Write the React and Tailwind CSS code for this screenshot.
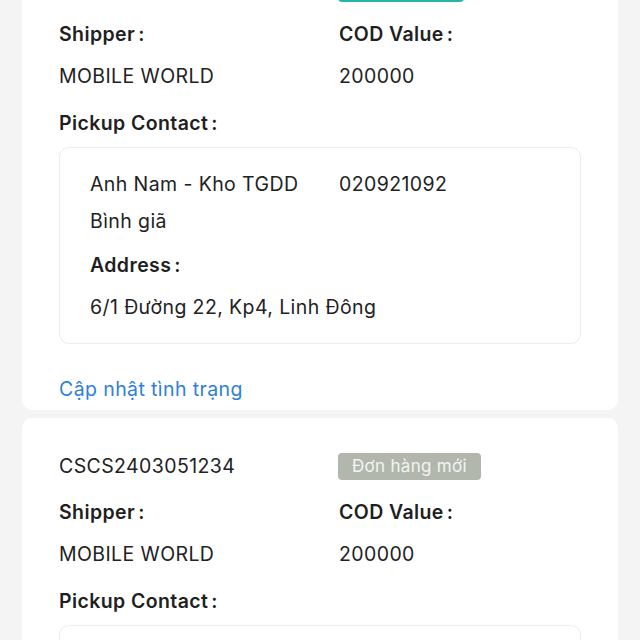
import React from 'react';

const orders = [
  {
    code: 'CSCS2403051233',
    status: 'Đã lấy hàng',
    badge: 'bg-[#25b5ad] text-white',
    shipper: 'MOBILE WORLD',
    cod: '200000',
    contact: 'Anh Nam - Kho TGDD',
    phone: '020921092',
    area: 'Bình giã',
    address: '6/1 Đường 22, Kp4, Linh Đông',
  },
  {
    code: 'CSCS2403051234',
    status: 'Đơn hàng mới',
    badge: 'bg-[#b2b7ad] text-[#f3f4f1]',
    shipper: 'MOBILE WORLD',
    cod: '200000',
    contact: 'Anh Nam - Kho TGDD',
    phone: '020921092',
    area: 'Bình giã',
    address: '6/1 Đường 22, Kp4, Linh Đông',
  },
];

const Label = ({ children }) => (
  <span className="font-semibold text-[#1f1f1f]">
    {children}
    <span className="ml-[3px]">:</span>
  </span>
);

const OrderCard = ({ order }) => (
  <div className="bg-white rounded-[10px] px-[37px] pt-[35px] pb-[9px]">
    {/* code + status */}
    <div className="flex items-center h-[27px]">
      <div className="w-[279px]">{order.code}</div>
      <span className={`h-[27px] px-[14px] rounded-[4px] text-[17px] tracking-[0.3px] leading-[27px] ${order.badge}`}>
        {order.status}
      </span>
    </div>

    {/* shipper / cod */}
    <div className="flex mt-[20px] h-[24px] leading-[24px]">
      <div className="w-[280px]"><Label>Shipper</Label></div>
      <div><Label>COD Value</Label></div>
    </div>
    <div className="flex mt-[18px] h-[24px] leading-[24px]">
      <div className="w-[280px]">{order.shipper}</div>
      <div>{order.cod}</div>
    </div>

    <div className="mt-[23px] h-[24px] leading-[24px]">
      <Label>Pickup Contact</Label>
    </div>

    {/* pickup box */}
    <div className="mt-[12px] border border-[#ececec] rounded-[10px] pl-[30px] pt-[24px] pb-[24px]">
      <div className="flex h-[24px] leading-[24px]">
        <div className="w-[249px]">{order.contact}</div>
        <div>{order.phone}</div>
      </div>
      <div className="mt-[13px] h-[24px] leading-[24px]">{order.area}</div>
      <div className="mt-[20px] h-[24px] leading-[24px]">
        <Label>Address</Label>
      </div>
      <div className="mt-[18px] h-[24px] leading-[24px]">{order.address}</div>
    </div>

    <div className="mt-[33px] h-[24px] leading-[24px] text-[#2f80d6]">Cập nhật tình trạng</div>
  </div>
);

export default function App() {
  return (
    <div
      className="min-h-screen bg-[#f4f4f4] px-[22px] overflow-hidden text-[19.5px] tracking-[0.4px] text-[#222]"
      style={{ fontFamily: 'Inter, "Noto Sans", sans-serif' }}
    >
      <div className="-mt-[60px] flex flex-col gap-[8px]">
        {orders.map((o) => (
          <OrderCard key={o.code} order={o} />
        ))}
      </div>
    </div>
  );
}
